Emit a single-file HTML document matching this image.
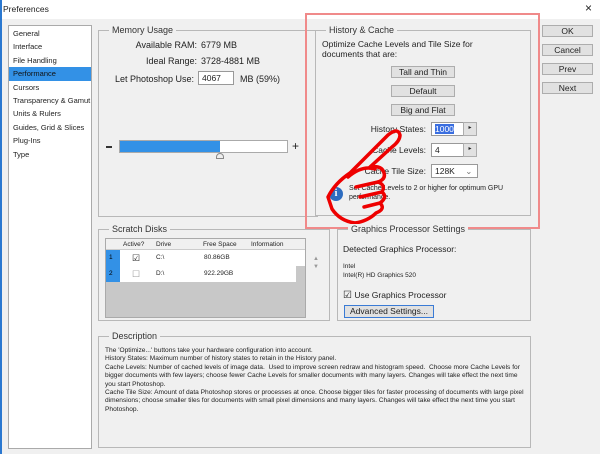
<!DOCTYPE html>
<html><head><style>
*{box-sizing:border-box;margin:0;padding:0}
body{width:600px;height:454px;background:#f0f0f0;font-family:"Liberation Sans",sans-serif;font-size:8px;color:#222;position:relative;overflow:hidden}
.a{position:absolute}
.r{position:absolute;text-align:right;white-space:nowrap}
.g{position:absolute;border:1px solid #b8b8b8}
.gt{position:absolute;top:-6px;left:10px;background:#f0f0f0;padding:0 3px;font-size:9px;color:#333}
.btn{position:absolute;background:#e1e1e1;border:1px solid #adadad;text-align:center;font-size:8.5px;line-height:11px}
.inp{position:absolute;background:#fff;border:1px solid #999;font-size:8.5px;padding-left:3px}
.side div{height:13.4px;padding-left:4px;font-size:7.5px;line-height:13px}
</style></head><body>
<div class="a" style="left:0;top:0;width:600px;height:19px;background:#fff"></div>
<div class="a" style="left:0;top:0;width:2px;height:454px;background:#2b78d0"></div>
<div class="a" style="left:3px;top:4px;font-size:8.5px">Preferences</div>
<div class="a" style="left:585px;top:1px;font-size:12px">×</div>
<div class="a side" style="left:8px;top:25px;width:84px;height:424px;background:#fff;border:1px solid #aaa;padding-top:1px">
<div>General</div><div>Interface</div><div>File Handling</div><div style="background:#3391e6;color:#111">Performance</div><div>Cursors</div><div>Transparency &amp; Gamut</div><div>Units &amp; Rulers</div><div>Guides, Grid &amp; Slices</div><div>Plug-Ins</div><div>Type</div></div>

<div class="g" style="left:98px;top:30px;width:220px;height:187px"><div class="gt">Memory Usage</div></div>
<div class="r" style="right:403px;top:40px;font-size:9px">Available RAM:</div>
<div class="a" style="left:201px;top:40px;font-size:9px">6779 MB</div>
<div class="r" style="right:403px;top:56px;font-size:9px">Ideal Range:</div>
<div class="a" style="left:201px;top:56px;font-size:9px">3728-4881 MB</div>
<div class="r" style="right:406px;top:74px;font-size:9px">Let Photoshop Use:</div>
<div class="inp" style="left:198px;top:71px;width:36px;height:14px;line-height:12px">4067</div>
<div class="a" style="left:240px;top:74px;font-size:9px">MB (59%)</div>
<div class="a" style="left:106px;top:146px;width:6px;height:1.5px;background:#333"></div>
<div class="a" style="left:119px;top:140px;width:169px;height:13px;background:#fff;border:1px solid #aaa"></div>
<div class="a" style="left:120px;top:141px;width:100px;height:11px;background:#3391e6"></div>
<div class="a" style="left:216px;top:153px;width:8px;height:6px;border:1px solid #888;border-radius:4px 4px 0 0;background:#eee"></div>
<div class="a" style="left:292px;top:139px;font-size:12px">+</div>

<div class="g" style="left:315px;top:30px;width:216px;height:186px;background:#f0f0f0"><div class="gt">History &amp; Cache</div></div>
<div class="a" style="left:322px;top:39px;font-size:8.5px;line-height:10px">Optimize Cache Levels and Tile Size for<br>documents that are:</div>
<div class="btn" style="left:391px;top:66px;width:64px;height:12px">Tall and Thin</div>
<div class="btn" style="left:391px;top:85px;width:64px;height:12px">Default</div>
<div class="btn" style="left:391px;top:104px;width:64px;height:12px">Big and Flat</div>
<div class="r" style="right:174px;top:124px;font-size:8.5px">History States:</div>
<div class="inp" style="left:431px;top:122px;width:33px;height:14px;line-height:12px"><span style="background:#3a6ee0;color:#fff">1000</span></div>
<div class="btn" style="left:463px;top:122px;width:14px;height:14px;font-size:6px">▸</div>
<div class="r" style="right:174px;top:145px;font-size:8.5px">Cache Levels:</div>
<div class="inp" style="left:431px;top:143px;width:33px;height:14px;line-height:12px">4</div>
<div class="btn" style="left:463px;top:143px;width:14px;height:14px;font-size:6px">▸</div>
<div class="r" style="right:174px;top:166px;font-size:8.5px">Cache Tile Size:</div>
<div class="inp" style="left:431px;top:164px;width:47px;height:14px;line-height:12px">128K <span style="color:#777;margin-left:8px">⌄</span></div>
<div class="a" style="left:349px;top:184px;font-size:7px;line-height:9px">Set Cache Levels to 2 or higher for optimum GPU<br>performance.</div>
<div class="a" style="left:329px;top:187px;width:14px;height:14px;border-radius:7px;background:#2d6cc0;color:#fff;font-weight:bold;font-size:10px;text-align:center;line-height:14px;font-family:'Liberation Serif',serif">i</div>
<svg class="a" style="left:320px;top:125px" width="110" height="105" viewBox="0 0 110 105"><g fill="none" stroke="#e00" stroke-width="3.5" stroke-linejoin="round" stroke-linecap="round">
<path d="M8 72 Q15 58 30 48 L68 10 Q78 2 80 10 Q80 16 72 22 L50 42 Q62 40 64 48 Q66 54 58 57 Q66 60 62 67 Q68 72 60 78 Q66 84 56 88 Q48 96 35 98 Q20 96 12 84Z"/>
<path d="M28 52 Q42 40 55 44 M36 62 L58 57 M40 72 L62 67 M44 82 L60 78"/></g></svg>
<div class="a" style="left:305px;top:13px;width:235px;height:216px;border:2px solid #f08a8a"></div>

<div class="btn" style="left:542px;top:25px;width:51px;height:12px">OK</div>
<div class="btn" style="left:542px;top:44px;width:51px;height:12px">Cancel</div>
<div class="btn" style="left:542px;top:63px;width:51px;height:12px">Prev</div>
<div class="btn" style="left:542px;top:82px;width:51px;height:12px">Next</div>

<div class="g" style="left:98px;top:229px;width:232px;height:92px"><div class="gt">Scratch Disks</div></div>
<div class="a" style="left:105px;top:238px;width:201px;height:80px;background:#c8c8c8;border:1px solid #aaa;font-size:6.5px">
<div style="height:11px;background:#f0f0f0;border-bottom:1px solid #ccc;position:relative">
<span class="a" style="left:17px;top:2px">Active?</span><span class="a" style="left:50px;top:2px">Drive</span><span class="a" style="left:97px;top:2px">Free Space</span><span class="a" style="left:145px;top:2px">Information</span></div>
<div style="height:16px;background:#fff;position:relative"><span class="a" style="left:0;top:0;width:14px;height:16px;background:#3391e6;color:#000;padding:4px 3px">1</span><span class="a" style="left:26px;top:3px;font-size:9px">☑</span><span class="a" style="left:50px;top:4px">C:\</span><span class="a" style="left:98px;top:4px">80.86GB</span></div>
<div style="height:16px;background:#fff;position:relative;width:190px"><span class="a" style="left:0;top:0;width:14px;height:16px;background:#3391e6;color:#000;padding:4px 3px">2</span><span class="a" style="left:26px;top:3px;font-size:9px;color:#999">☐</span><span class="a" style="left:50px;top:4px">D:\</span><span class="a" style="left:98px;top:4px">922.29GB</span></div>
</div>
<div class="a" style="left:313px;top:255px;font-size:6px;color:#999;line-height:8px">▲<br>▼</div>

<div class="g" style="left:337px;top:229px;width:194px;height:92px"><div class="gt">Graphics Processor Settings</div></div>
<div class="a" style="left:343px;top:244px;font-size:8.5px">Detected Graphics Processor:</div>
<div class="a" style="left:343px;top:262px;font-size:6.5px;line-height:9px">Intel<br>Intel(R) HD Graphics 520</div>
<div class="a" style="left:343px;top:290px;font-size:8.5px"><span style="font-size:10px">☑</span> Use Graphics Processor</div>
<div class="btn" style="left:344px;top:305px;width:90px;height:13px;border:1px solid #3a7bd5">Advanced Settings...</div>

<div class="g" style="left:98px;top:336px;width:433px;height:112px"><div class="gt">Description</div></div>
<div class="a" style="left:105px;top:347px;width:424px;font-size:6.6px;line-height:8.4px">The 'Optimize...' buttons take your hardware configuration into account.<br>History States: Maximum number of history states to retain in the History panel.<br>Cache Levels: Number of cached levels of image data.&nbsp; Used to improve screen redraw and histogram speed.&nbsp; Choose more Cache Levels for bigger documents with few layers; choose fewer Cache Levels for smaller documents with many layers. Changes will take effect the next time you start Photoshop.<br>Cache Tile Size: Amount of data Photoshop stores or processes at once. Choose bigger tiles for faster processing of documents with large pixel dimensions; choose smaller tiles for documents with small pixel dimensions and many layers. Changes will take effect the next time you start Photoshop.</div>
</body></html>
